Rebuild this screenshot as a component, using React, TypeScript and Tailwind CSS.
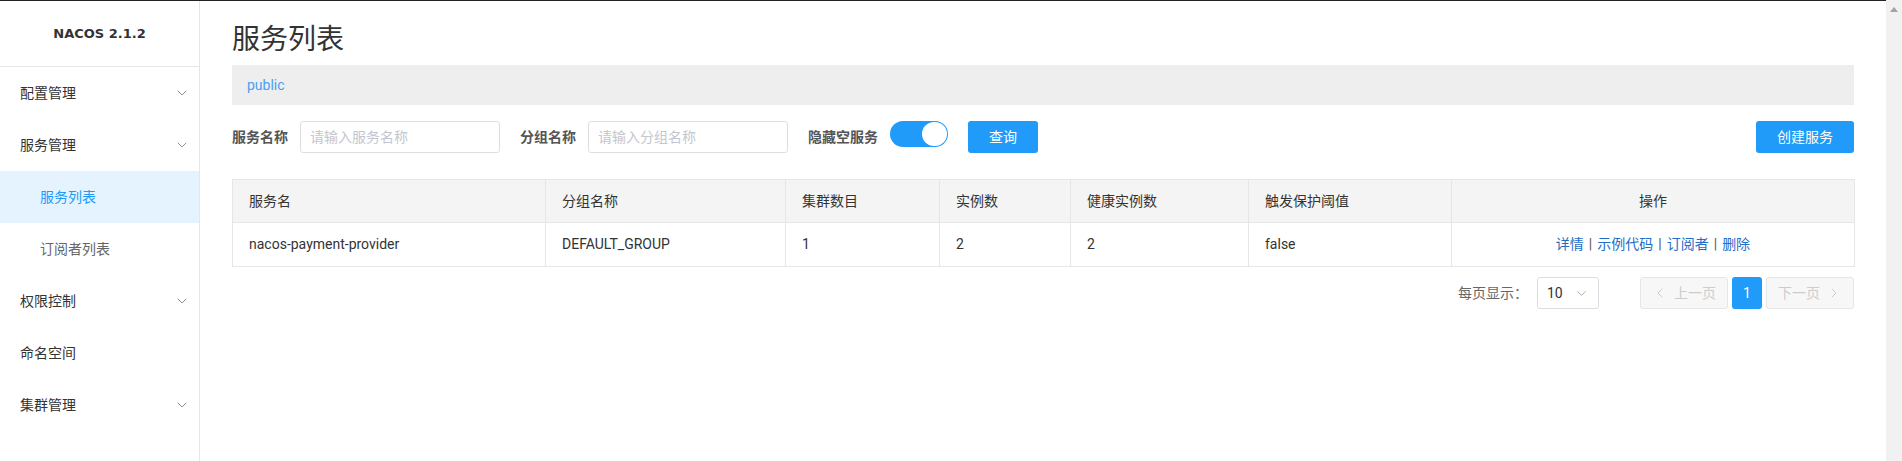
import { ChevronDown, ChevronLeft, ChevronRight } from 'lucide-react';

const menu = [
  { label: '配置管理', arrow: true },
  { label: '服务管理', arrow: true },
  { label: '服务列表', sub: true, active: true },
  { label: '订阅者列表', sub: true },
  { label: '权限控制', arrow: true },
  { label: '命名空间' },
  { label: '集群管理', arrow: true }
];

const columns = [
  { title: '服务名', width: 313 },
  { title: '分组名称', width: 240 },
  { title: '集群数目', width: 154 },
  { title: '实例数', width: 131 },
  { title: '健康实例数', width: 178 },
  { title: '触发保护阈值', width: 203 },
  { title: '操作', width: 403 }
];

const row = ['nacos-payment-provider', 'DEFAULT_GROUP', '1', '2', '2', 'false'];
const actions = ['详情', '示例代码', '订阅者', '删除'];

function Sidebar() {
  return (
    <aside className="w-[200px] shrink-0 border-r border-[#e6e6e6] bg-white">
      <div className="flex h-[66px] items-center justify-center border-b border-[#e6e6e6]">
        <span className="font-['DejaVu_Sans'] text-[13px] font-bold text-[#333]">NACOS 2.1.2</span>
      </div>
      {menu.map((item) => (
        <div
          key={item.label}
          className={
            item.active
              ? 'flex h-[52px] items-center bg-[#e5f3ff] pl-[40px] text-[14px] text-[#209bfa]'
              : item.sub
                ? 'flex h-[52px] items-center pl-[40px] text-[14px] text-[#666]'
                : 'flex h-[52px] items-center justify-between pl-[20px] pr-[9px] text-[14px] text-[#333]'
          }
        >
          <span>{item.label}</span>
          {item.arrow && <ChevronDown size={16} strokeWidth={1.1} className="text-[#666]" />}
        </div>
      ))}
    </aside>
  );
}

function Filters() {
  return (
    <div className="mt-[16px] flex h-[32px] items-center">
      <span className="mr-[12px] text-[14px] font-bold text-[#555]">服务名称</span>
      <input
        placeholder="请输入服务名称"
        className="h-[32px] w-[200px] rounded-[3px] border border-[#dcdee3] px-[9px] text-[14px] placeholder:text-[#c4c6cf] outline-none"
      />
      <span className="ml-[20px] mr-[12px] text-[14px] font-bold text-[#555]">分组名称</span>
      <input
        placeholder="请输入分组名称"
        className="h-[32px] w-[200px] rounded-[3px] border border-[#dcdee3] px-[9px] text-[14px] placeholder:text-[#c4c6cf] outline-none"
      />
      <span className="ml-[20px] mr-[12px] text-[14px] font-bold text-[#555]">隐藏空服务</span>
      <div className="flex h-[26px] w-[58px] items-center justify-end self-start rounded-full bg-[#209bfa] p-[1px]">
        <div className="h-[24px] w-[25px] rounded-full bg-white" />
      </div>
      <button className="ml-[20px] h-[32px] w-[70px] rounded-[3px] bg-[#209bfa] text-[14px] text-white">查询</button>
      <button className="ml-auto h-[32px] w-[98px] rounded-[3px] bg-[#209bfa] text-[14px] text-white">创建服务</button>
    </div>
  );
}

function ServiceTable() {
  return (
    <table className="mt-[26px] w-full table-fixed border-collapse border border-[#e6e6e6] text-[14px] text-[#333]">
      <colgroup>
        {columns.map((c) => (
          <col key={c.title} style={{ width: c.width }} />
        ))}
      </colgroup>
      <thead>
        <tr className="h-[43px] bg-[#f4f4f4]">
          {columns.map((c, i) => (
            <th
              key={c.title}
              className={
                i === columns.length - 1
                  ? 'border border-[#e6e6e6] text-center font-normal'
                  : 'border border-[#e6e6e6] pl-[16px] text-left font-normal'
              }
            >
              {c.title}
            </th>
          ))}
        </tr>
      </thead>
      <tbody>
        <tr className="h-[44px]">
          {row.map((v, i) => (
            <td key={i} className="border border-[#e6e6e6] pl-[16px]">
              {v}
            </td>
          ))}
          <td className="border border-[#e6e6e6] text-center">
            {actions.map((a, i) => (
              <span key={a}>
                {i > 0 && <span className="mx-[5px] text-[#555]">|</span>}
                <span className="text-[#1f6dc6]">{a}</span>
              </span>
            ))}
          </td>
        </tr>
      </tbody>
    </table>
  );
}

function Pagination() {
  return (
    <div className="mt-[10px] flex h-[32px] items-center justify-end text-[14px]">
      <span className="mr-[9px] text-[#666]">每页显示：</span>
      <div className="flex h-[32px] w-[62px] items-center justify-between rounded-[3px] border border-[#dcdee3] pl-[9px] pr-[9px] text-[#333]">
        <span>10</span>
        <ChevronDown size={15} strokeWidth={1.2} className="text-[#888]" />
      </div>
      <div className="ml-[41px] flex h-[32px] w-[88px] items-center justify-center gap-[6px] rounded-[3px] border border-[#e6e6e6] bg-[#f7f7f7] text-[#ccc]">
        <ChevronLeft size={16} strokeWidth={1.5} />
        <span>上一页</span>
      </div>
      <div className="ml-[4px] flex h-[32px] w-[30px] items-center justify-center rounded-[3px] bg-[#209bfa] text-white">1</div>
      <div className="ml-[4px] flex h-[32px] w-[88px] items-center justify-center gap-[6px] rounded-[3px] border border-[#e6e6e6] bg-[#f7f7f7] text-[#ccc]">
        <span>下一页</span>
        <ChevronRight size={16} strokeWidth={1.5} />
      </div>
    </div>
  );
}

export default function App() {
  return (
    <div className="flex h-[461px] w-full overflow-hidden bg-white font-['Roboto','Noto_Sans_CJK_SC',sans-serif] leading-normal">
      <div className="flex min-w-0 flex-1 border-t border-[#1f2326]">
        <Sidebar />
        <main className="min-w-0 flex-1 px-[32px]">
          <h1 className="h-[64px] pt-[22px] text-[28px] leading-[34px] font-normal text-[#333]">服务列表</h1>
          <div className="flex h-[40px] items-center bg-[#eeeeee] pl-[15px] text-[14px] text-[#4a9ff2]">public</div>
          <Filters />
          <ServiceTable />
          <Pagination />
        </main>
      </div>
      <div className="flex w-[16px] shrink-0 justify-center bg-[#f1f1f1] pt-[7px]">
        <svg width="8" height="5" viewBox="0 0 8 5">
          <polygon points="4,0 8,5 0,5" fill="#a3a3a3" />
        </svg>
      </div>
    </div>
  );
}
